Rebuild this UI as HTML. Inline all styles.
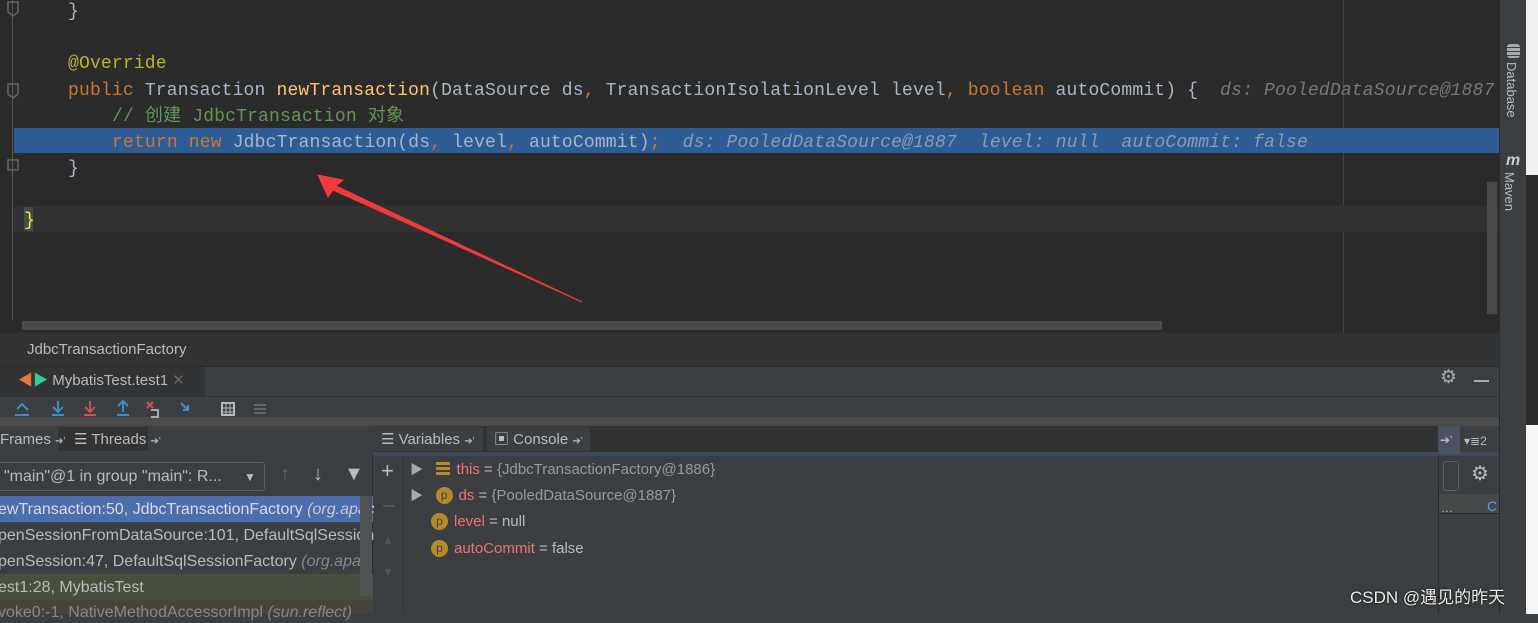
<!DOCTYPE html>
<html><head><meta charset="utf-8"><style>
*{margin:0;padding:0;box-sizing:border-box}
body{width:1538px;height:614px;overflow:hidden;background:#3c3f41;position:relative;font-family:"Liberation Sans","Noto Sans CJK SC",sans-serif}
.a{position:absolute}
.code{font-family:"Liberation Mono","Noto Sans CJK SC",monospace;font-size:18px;letter-spacing:0.17px;white-space:pre;color:#a9b7c6;line-height:26px}
.kw{color:#cc7832}.fn{color:#ffc66d}.an{color:#bbb529}.cm{color:#629755}.hint{color:#787878;font-style:italic}
.hl .hint{color:#8a9bb3}
.ui{font-size:15px;color:#bbbbbb;white-space:nowrap;line-height:20px}
.p{display:inline-block;width:17px;height:17px;border-radius:50%;background:#b58a2a;color:#3c3f41;font-size:12px;text-align:center;line-height:17px;margin-right:6px;vertical-align:top;margin-top:1px}
.vn{color:#f07178}
</style></head><body>
<div class="a" style="left:0;top:0;width:1499px;height:333px;background:#2b2b2b"></div>
<div class="a" style="left:12px;top:0;width:1px;height:320px;background:#555"></div>
<div class="a" style="left:1343px;top:0;width:1px;height:333px;background:#444"></div>
<div class="a" style="left:14px;top:206px;width:1485px;height:26px;background:#323232"></div>
<div class="a" style="left:14px;top:128px;width:1485px;height:25px;background:#2d5c97"></div>
<div class="a" style="left:1487px;top:182px;width:10px;height:132px;background:#4a4a4a"></div>
<div class="a" style="left:22px;top:321px;width:1140px;height:9px;background:#4b4b4b"></div>
<div class="a code" style="left:68px;top:-1px">}</div>
<div class="a code" style="left:68px;top:51px"><span class="an">@Override</span></div>
<div class="a code" style="left:68px;top:78px"><span class="kw">public</span> Transaction <span class="fn">newTransaction</span>(DataSource ds<span class="kw">,</span> TransactionIsolationLevel level<span class="kw">,</span> <span class="kw">boolean</span> autoCommit) {  <span class="hint">ds: PooledDataSource@1887</span></div>
<div class="a code" style="left:112px;top:104px"><span class="cm">// 创建 JdbcTransaction 对象</span></div>
<div class="a code hl" style="left:112px;top:130px"><span class="kw">return new</span> JdbcTransaction(ds<span class="kw">,</span> level<span class="kw">,</span> autoCommit)<span class="kw">;</span>  <span class="hint">ds: PooledDataSource@1887  level: null  autoCommit: false</span></div>
<div class="a code" style="left:68px;top:156px">}</div>
<div class="a" style="left:24px;top:207px;width:9px;height:24px;background:#3b514d"></div>
<div class="a code" style="left:24px;top:208px;color:#ffef28">}</div>
<svg class="a" style="left:0;top:0" width="30" height="200"><g fill="none" stroke="#666" stroke-width="1.5"><path d="M8 2h10v10l-5 4-5-4z"/><path d="M8 84h10v10l-5 4-5-4z"/><path d="M8 160h10v10H8z"/></g></svg>
<svg class="a" style="left:0;top:0" width="1538" height="614"><g fill="#f23a3a" stroke="#f23a3a"><path d="M318 175 L343 180 L336 186 L582 302 L333 190 L328 197 Z"/><path d="M700 512 L722 504 L720 513 L765 517 L720 517 L722 523 Z"/><path d="M624 547 L650 540 L647 548 L876 561 L646 552 L648 559 Z"/></g></svg>
<div class="a" style="left:1499px;top:0;width:27px;height:614px;background:#3c3f41;border-left:1px solid #2b2b2b"></div>
<div class="a" style="left:1526px;top:0;width:12px;height:175px;background:#f0f0f0"></div>
<div class="a" style="left:1526px;top:175px;width:12px;height:250px;background:#2b2b2b"></div>
<div class="a" style="left:1526px;top:425px;width:12px;height:189px;background:#f5f5f5"></div>
<div class="a ui" style="top:62px;transform:rotate(90deg);transform-origin:0 0;left:1521px;font-size:13px">Database</div>
<div class="a ui" style="left:1519px;top:172px;transform:rotate(90deg);transform-origin:0 0;font-size:13px">Maven</div>
<div class="a" style="left:1506px;top:152px;font:bold italic 16px 'Liberation Sans';color:#ccc">m</div>
<div class="a" style="left:1507px;top:44px;width:13px;height:14px;background:repeating-linear-gradient(#aaa 0 3px,#3c3f41 3px 4px);border-radius:3px"></div>
<div class="a" style="left:0;top:333px;width:1499px;height:33px;background:#313335"></div>
<div class="a ui" style="left:27px;top:340px">JdbcTransactionFactory</div>
<div class="a" style="left:0;top:366px;width:1499px;height:31px;background:#3c3f41;border-top:1px solid #2b2b2b;border-bottom:1px solid #333"></div>
<div class="a" style="left:0;top:367px;width:205px;height:30px;background:#313335"></div>
<div class="a ui" style="left:18px;top:371px"><span style="color:#e8753a">◀</span><span style="color:#3c9">▶</span> MybatisTest.test1 <span style="color:#666">✕</span></div>
<div class="a ui" style="left:1440px;top:368px;font-size:19px;color:#aaa">⚙</div>
<div class="a" style="left:1474px;top:380px;width:15px;height:2px;background:#aaa"></div>
<div class="a" style="left:0;top:397px;width:1499px;height:22px;background:#3c3f41"></div>
<div class="a" style="left:0;top:417px;width:1499px;height:9px;background:#4b4b4b"></div>
<svg class="a" style="left:10px;top:399px" width="270" height="20"><g stroke-width="2" fill="none"><path d="M7 10l5-5 6 6" stroke="#3592c4"/><path d="M5 16h14" stroke="#3592c4"/><path d="M48 2v10M43 8l5 5 5-5M42 16h12" stroke="#3592c4"/><path d="M80 2v10M75 8l5 5 5-5M74 16h12" stroke="#c75450"/><path d="M113 13V3M108 7l5-5 5 5M107 16h12" stroke="#3592c4"/><path d="M137 3l6 6M143 3l-6 6" stroke="#c75450"/><path d="M141 11h7v7h-7" stroke="#aaa"/><path d="M171 4l7 7M178 6v5h-5" stroke="#3592c4"/><rect x="212" y="4" width="12" height="12" stroke="#bbb"/><path d="M212 9h12M212 13h12M216 4v12M220 4v12" stroke="#bbb" stroke-width="1"/><path d="M244 6h12M244 10h12M244 14h12" stroke="#666"/></g></svg>
<div class="a" style="left:0;top:426px;width:1499px;height:28px;background:#3c3f41"></div>
<div class="a" style="left:58px;top:427px;width:90px;height:24px;background:#313335"></div>
<div class="a ui" style="left:0;top:430px;font-size:15px">Frames <span style="font-size:10px">➔'</span></div>
<div class="a ui" style="left:74px;top:430px;font-size:15px">☰ Threads <span style="font-size:10px">➔'</span></div>
<div class="a" style="left:373px;top:426px;width:1065px;height:28px;background:#313335"></div>
<div class="a" style="left:373px;top:427px;width:110px;height:24px;background:#3c3f41"></div>
<div class="a" style="left:487px;top:427px;width:103px;height:24px;background:#3c3f41"></div>
<div class="a ui" style="left:381px;top:430px;font-size:15px">☰ Variables <span style="font-size:10px">➔'</span></div>
<div class="a ui" style="left:494px;top:430px;font-size:15px">▣ Console <span style="font-size:10px">➔'</span></div>
<div class="a" style="left:373px;top:452px;width:1126px;height:4px;background:#3d4b5c"></div>
<div class="a" style="left:1438px;top:426px;width:22px;height:28px;background:#4a5263"></div>
<div class="a ui" style="left:1440px;top:430px;font-size:12px">➔'</div>
<div class="a ui" style="left:1464px;top:431px;font-size:12px">▾≣2</div>
<div class="a" style="left:0;top:456px;width:373px;height:158px;background:#3c3f41;border-right:1px solid #2b2b2b"></div>
<div class="a" style="left:0;top:462px;width:265px;height:29px;border:1px solid #5e6060;border-left:none;border-radius:0 3px 3px 0"></div>
<div class="a ui" style="left:4px;top:467px;font-size:16px">"main"@1 in group "main": R...</div>
<div class="a ui" style="left:244px;top:467px;font-size:12px">▼</div>
<div class="a ui" style="left:280px;top:464px;font-size:20px;color:#666">↑</div>
<div class="a ui" style="left:313px;top:464px;font-size:20px">↓</div>
<div class="a ui" style="left:344px;top:464px;font-size:20px">▼</div>
<div class="a" style="left:0;top:496px;width:373px;height:26px;background:#4b6eaf"></div>
<div class="a" style="left:0;top:574px;width:373px;height:26px;background:#45503f"></div>
<div class="a" style="left:0;top:600px;width:373px;height:14px;background:#4b4339"></div>
<div class="a ui" style="left:-2px;top:500px;font-size:16px;color:#ddd">ewTransaction:50, JdbcTransactionFactory <i style="color:#ccc">(org.apac</i></div>
<div class="a ui" style="left:-2px;top:526px;font-size:16px">penSessionFromDataSource:101, DefaultSqlSession</div>
<div class="a ui" style="left:-2px;top:552px;font-size:16px">penSession:47, DefaultSqlSessionFactory <i style="color:#888">(org.apac</i></div>
<div class="a ui" style="left:-2px;top:578px;font-size:16px">est1:28, MybatisTest</div>
<div class="a ui" style="left:-2px;top:603px;font-size:16px;color:#888">voke0:-1, NativeMethodAccessorImpl <i>(sun.reflect)</i></div>
<div class="a" style="left:360px;top:496px;width:12px;height:100px;background:#505354"></div>
<div class="a" style="left:374px;top:456px;width:30px;height:158px;background:#3c3f41;border-right:1px solid #333"></div>
<div class="a ui" style="left:381px;top:461px;font-size:22px;color:#bbb">+</div>
<div class="a" style="left:383px;top:505px;width:12px;height:2px;background:#555"></div>
<div class="a ui" style="left:382px;top:530px;font-size:12px;color:#555">▲</div>
<div class="a ui" style="left:382px;top:562px;font-size:12px;color:#555">▼</div>
<div class="a" style="left:405px;top:456px;width:1033px;height:158px;background:#3c3f41"></div>
<div class="a ui" style="left:410px;top:460px;font-size:15px"><span style="color:#aaa;font-size:13px">▶</span>&nbsp;&nbsp;&nbsp;<span style="display:inline-block;width:14px;height:13px;background:repeating-linear-gradient(#b58a2a 0 3px,#3c3f41 3px 5px);vertical-align:-1px;margin-right:7px"></span><span class="vn">this</span> = <span style="color:#999">{JdbcTransactionFactory@1886}</span></div>
<div class="a ui" style="left:410px;top:486px;font-size:15px"><span style="color:#aaa;font-size:13px">▶</span>&nbsp;&nbsp;&nbsp;<span class="p">p</span><span class="vn">ds</span> = <span style="color:#999">{PooledDataSource@1887}</span></div>
<div class="a ui" style="left:431px;top:512px;font-size:15px"><span class="p">p</span><span class="vn">level</span> = null</div>
<div class="a ui" style="left:431px;top:539px;font-size:15px"><span class="p">p</span><span class="vn">autoCommit</span> = false</div>
<div class="a" style="left:1438px;top:456px;width:61px;height:158px;background:#3c3f41;border-left:1px solid #2b2b2b"></div>
<div class="a" style="left:1443px;top:461px;width:16px;height:30px;border:1px solid #5e6060;border-radius:3px"></div>
<div class="a ui" style="left:1471px;top:464px;font-size:20px">⚙</div>
<div class="a" style="left:1439px;top:494px;width:60px;height:20px;background:#45494a;border-bottom:1px solid #2b2b2b"></div>
<div class="a ui" style="left:1441px;top:498px;font-size:12px">…</div>
<div class="a ui" style="left:1487px;top:496px;font-size:14px;color:#589df6">C</div>
<div class="a" style="left:1350px;top:583px;font-size:17px;color:#eee;white-space:nowrap;text-shadow:0 0 2px #000;font-family:'Liberation Sans','Noto Sans CJK SC',sans-serif">CSDN @遇见的昨天</div>
</body></html>
